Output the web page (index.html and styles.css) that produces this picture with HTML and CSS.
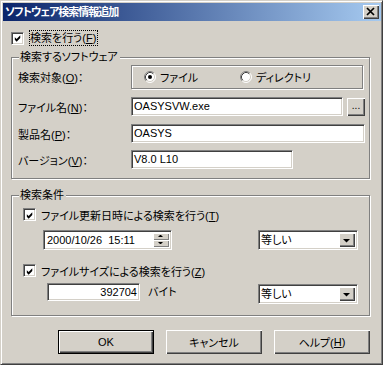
FILE: index.html
```html
<!DOCTYPE html>
<html lang="ja">
<head>
<meta charset="utf-8">
<title>ソフトウェア検索情報追加</title>
<link rel="stylesheet" href="styles.css">
</head>
<body>
<div class="window">
  <div class="titlebar">
    <span class="title-text">ソフトウェア検索情報追加</span>
    <span class="close-btn">
      <svg width="16" height="14" viewBox="0 0 16 14"><path d="M4 3 L11 10 M11 3 L4 10" stroke="#000" stroke-width="1.7" fill="none"/></svg>
    </span>
  </div>
  <div class="content">
    <div class="top-check">
      <span class="cb"><svg width="11" height="11" viewBox="0 0 11 11"><path d="M2 4 L4 6 L8 2 L8 5 L4 9 L2 7 Z" fill="#000"/></svg></span>
      <span class="focus">検索を行う(<u>F</u>)</span>
    </div>

    <div class="group group-sw">
      <span class="legend">検索するソフトウェア</span>
      <div class="row row-radio">
        <span class="lbl">検索対象(<u>O</u>)：</span>
        <div class="radio-panel">
          <span class="radio-item radio-file">
            <svg class="radio" width="12" height="12" viewBox="0 0 12 12">
              <circle cx="6" cy="6" r="5" fill="#fff"/>
              <path d="M2.11 9.89 A5.5 5.5 0 0 1 9.89 2.11" stroke="#808080" fill="none"/>
              <path d="M9.89 2.11 A5.5 5.5 0 0 1 2.11 9.89" stroke="#fff" fill="none"/>
              <path d="M2.82 9.18 A4.5 4.5 0 0 1 9.18 2.82" stroke="#404040" fill="none"/>
              <path d="M9.18 2.82 A4.5 4.5 0 0 1 2.82 9.18" stroke="#d4d0c8" fill="none"/>
              <circle cx="6" cy="6" r="2" fill="#000"/>
            </svg>
            <span>ファイル</span>
          </span>
          <span class="radio-item radio-dir">
            <svg class="radio" width="12" height="12" viewBox="0 0 12 12">
              <circle cx="6" cy="6" r="5" fill="#fff"/>
              <path d="M2.11 9.89 A5.5 5.5 0 0 1 9.89 2.11" stroke="#808080" fill="none"/>
              <path d="M9.89 2.11 A5.5 5.5 0 0 1 2.11 9.89" stroke="#fff" fill="none"/>
              <path d="M2.82 9.18 A4.5 4.5 0 0 1 9.18 2.82" stroke="#404040" fill="none"/>
              <path d="M9.18 2.82 A4.5 4.5 0 0 1 2.82 9.18" stroke="#d4d0c8" fill="none"/>
            </svg>
            <span>ディレクトリ</span>
          </span>
        </div>
      </div>
      <div class="row row-file">
        <span class="lbl">ファイル名(<u>N</u>)：</span>
        <div class="edit edit-file">OASYSVW.exe</div>
        <span class="btn browse-btn">...</span>
      </div>
      <div class="row row-product">
        <span class="lbl">製品名(<u>P</u>)：</span>
        <div class="edit edit-product">OASYS</div>
      </div>
      <div class="row row-version">
        <span class="lbl">バージョン(<u>V</u>)：</span>
        <div class="edit edit-version">V8.0 L10</div>
      </div>
    </div>

    <div class="group group-cond">
      <span class="legend">検索条件</span>
      <div class="crow crow-date">
        <span class="cb"><svg width="11" height="11" viewBox="0 0 11 11"><path d="M2 4 L4 6 L8 2 L8 5 L4 9 L2 7 Z" fill="#000"/></svg></span>
        <span class="ctext">ファイル更新日時による検索を行う(<u>T</u>)</span>
      </div>
      <div class="frow frow-date">
        <div class="edit datetime">
          <span class="dt-text">2000/10/26  15:11</span>
          <span class="spin">
            <span class="spin-btn"><svg width="12" height="5" viewBox="0 0 12 5"><path d="M5 1 L6 1 L8 3 L3 3 Z" fill="#000"/></svg></span>
            <span class="spin-btn"><svg width="12" height="5" viewBox="0 0 12 5"><path d="M3 1 L8 1 L6 3 L5 3 Z" fill="#000"/></svg></span>
          </span>
        </div>
        <div class="edit combo">
          <span class="combo-text">等しい</span>
          <span class="drop-btn"><svg width="12" height="12" viewBox="0 0 12 12"><path d="M2 5 L9 5 L5.5 8.5 Z" fill="#000"/></svg></span>
        </div>
      </div>
      <div class="crow crow-size">
        <span class="cb"><svg width="11" height="11" viewBox="0 0 11 11"><path d="M2 4 L4 6 L8 2 L8 5 L4 9 L2 7 Z" fill="#000"/></svg></span>
        <span class="ctext">ファイルサイズによる検索を行う(<u>Z</u>)</span>
      </div>
      <div class="frow frow-size">
        <div class="edit size-edit">392704</div>
        <span class="unit">バイト</span>
        <div class="edit combo combo2">
          <span class="combo-text">等しい</span>
          <span class="drop-btn"><svg width="12" height="12" viewBox="0 0 12 12"><path d="M2 5 L9 5 L5.5 8.5 Z" fill="#000"/></svg></span>
        </div>
      </div>
    </div>

    <div class="buttons">
      <span class="btn dlg-btn default">OK</span>
      <span class="btn dlg-btn">キャンセル</span>
      <span class="btn dlg-btn">ヘルプ(<u>H</u>)</span>
    </div>
  </div>
</div>
</body>
</html>
```
FILE: styles.css
```css
html, body {
  margin: 0;
  padding: 0;
  background: #d4d0c8;
}
body {
  font-family: "Liberation Sans", "Noto Sans CJK JP", sans-serif;
  font-size: 11px;
  font-feature-settings: "palt";
  color: #000;
}
u { text-decoration: underline; }

.window {
  width: 383px;
  height: 365px;
  box-sizing: border-box;
  background: #d4d0c8;
  border: 1px solid;
  border-color: #d4d0c8 #404040 #404040 #d4d0c8;
  box-shadow: inset 1px 1px #fff, inset -1px -1px #808080;
  padding: 2px;
  display: flex;
  flex-direction: column;
}

.titlebar {
  height: 18px;
  background: linear-gradient(to right, #0a246a, #a6caf0);
  display: flex;
  align-items: center;
  padding-left: 2px;
  margin: 0 -1px 0 0;
}
.title-text {
  color: #fff;
  font-weight: bold;
  font-size: 11px;
  line-height: 18px;
  letter-spacing: -1px;
}
.close-btn {
  margin-left: auto;
  margin-right: 2px;
  width: 16px;
  height: 14px;
  box-sizing: border-box;
  background: #d4d0c8;
  box-shadow: inset 1px 1px #fff, inset -1px -1px #404040, inset -2px -2px #808080;
  display: flex;
}

.content {
  display: flex;
  flex-direction: column;
  flex: 1;
  padding-right: 1px;
}

/* checkbox */
.cb {
  width: 13px;
  height: 13px;
  box-sizing: border-box;
  background: #fff;
  border: 1px solid;
  border-color: #808080 #fff #fff #808080;
  box-shadow: inset 1px 1px #404040, inset -1px -1px #d4d0c8;
  display: inline-flex;
  align-items: center;
  justify-content: center;
  flex: none;
}
.cb svg { display: block; margin: 1px 0 0 1px; }

.top-check {
  display: flex;
  align-items: center;
  height: 16px;
  margin-top: 9px;
  padding-left: 8px;
}
.focus {
  margin-left: 5px;
  border: 1px dotted #000;
  padding: 0 1px 0 0;
  line-height: 14px;
}

/* group boxes */
.group {
  position: relative;
  margin: 0 9px 0 8px;
  border: 1px solid #808080;
  box-shadow: inset 1px 1px #fff, 1px 1px #fff;
}
.legend {
  position: absolute;
  top: -8px;
  left: 7px;
  padding: 0 2px 0 1px;
  background: #d4d0c8;
  line-height: 14px;
}
.group-sw {
  margin-top: 11px;
  padding: 7px 0 9px 6px;
  height: 122px;
  box-sizing: border-box;
}
.row {
  display: flex;
  align-items: center;
}
.lbl {
  width: 113px;
  flex: none;
}
.row-file { margin-top: 8px; }
.row-product { margin-top: 8px; }
.row-version { margin-top: 7px; }

.radio-panel {
  width: 232px;
  height: 24px;
  box-sizing: border-box;
  border: 1px solid #808080;
  box-shadow: inset 1px 1px #fff, 1px 1px #fff;
  display: flex;
  align-items: center;
}
.radio-item {
  display: flex;
  align-items: center;
}
.radio { display: block; margin-right: 4px; }
.radio-file { margin-left: 12px; width: 96px; }

.edit {
  height: 19px;
  box-sizing: border-box;
  background: #fff;
  border: 1px solid;
  border-color: #808080 #fff #fff #808080;
  box-shadow: inset 1px 1px #404040, inset -1px -1px #d4d0c8;
  padding: 0 2px;
  line-height: 17px;
  white-space: pre;
}
.edit-file { width: 212px; }
.edit-product { width: 234px; }
.edit-version { width: 162px; }

.btn {
  box-sizing: border-box;
  background: #d4d0c8;
  box-shadow: inset 1px 1px #fff, inset -1px -1px #404040, inset -2px -2px #808080;
  display: inline-flex;
  align-items: center;
  justify-content: center;
}
.browse-btn {
  width: 18px;
  height: 18px;
  margin-left: 4px;
  padding-bottom: 3px;
  font-size: 10px;
}

/* condition group */
.group-cond {
  margin-top: 16px;
  padding: 11px 11px 0 0;
  height: 121px;
  box-sizing: border-box;
}
.crow {
  display: flex;
  align-items: center;
  height: 15px;
  padding-left: 11px;
}
.ctext { margin-left: 5px; }
.crow-size { margin-top: 13px; }
.frow {
  display: flex;
  align-items: flex-start;
}
.frow-date { margin-top: 8px; padding-left: 31px; }
.frow-size { margin-top: 5px; padding-left: 35px; }

.datetime {
  width: 129px;
  height: 20px;
  display: flex;
  align-items: center;
  padding: 0 2px 0 3px;
  line-height: 18px;
}
.dt-text { flex: 1; }
.spin {
  display: flex;
  flex-direction: column;
  width: 16px;
  height: 14px;
}
.spin-btn {
  height: 7px;
  background: #d4d0c8;
  box-shadow: inset 1px 1px #fff, inset -1px -1px #808080;
  display: flex;
  align-items: center;
  justify-content: center;
}
.spin-btn svg { display: block; }

.combo {
  width: 100px;
  height: 20px;
  margin-left: auto;
  display: flex;
  align-items: center;
  padding: 0 2px 0 2px;
  line-height: 18px;
}
.combo2 { margin-top: 1px; }
.combo-text { flex: 1; }
.drop-btn {
  width: 16px;
  height: 14px;
  background: #d4d0c8;
  box-shadow: inset 1px 1px #fff, inset -1px -1px #404040, inset -2px -2px #808080;
  display: flex;
  align-items: center;
  justify-content: center;
}
.drop-btn svg { display: block; }

.size-edit {
  width: 93px;
  height: 18px;
  text-align: right;
  line-height: 16px;
}
.unit {
  margin-left: 8px;
  line-height: 18px;
}

/* bottom buttons */
.buttons {
  display: flex;
  justify-content: flex-end;
  gap: 12px;
  margin-top: 14px;
  padding-right: 9px;
}
.dlg-btn {
  width: 96px;
  height: 24px;
}
.dlg-btn.default {
  border: 1px solid #000;
}
```
